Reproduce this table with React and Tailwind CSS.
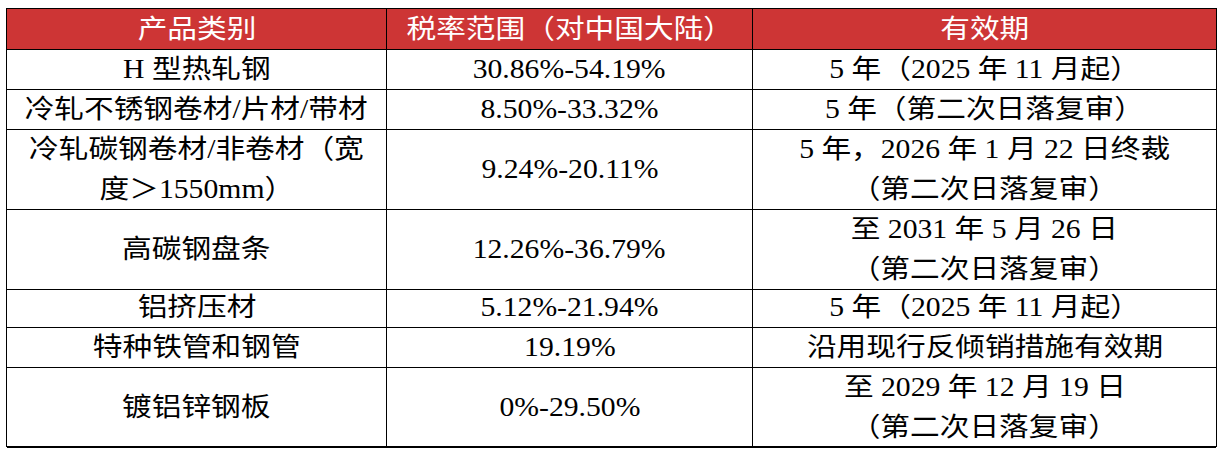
import React from "react";

const rows = [
  { h: "h-[40px]", c: ["H 型热轧钢", "30.86%-54.19%", "5 年（2025 年 11 月起）"] },
  { h: "h-[40px]", c: ["冷轧不锈钢卷材/片材/带材", "8.50%-33.32%", "5 年（第二次日落复审）"] },
  {
    h: "h-[80px]",
    c: [
      ["冷轧碳钢卷材/非卷材（宽", "度＞1550mm）"],
      "9.24%-20.11%",
      ["5 年，2026 年 1 月 22 日终裁", "（第二次日落复审）"],
    ],
  },
  { h: "h-[78px]", c: ["高碳钢盘条", "12.26%-36.79%", ["至 2031 年 5 月 26 日", "（第二次日落复审）"]] },
  { h: "h-[40px]", c: ["铝挤压材", "5.12%-21.94%", "5 年（2025 年 11 月起）"] },
  { h: "h-[40px]", c: ["特种铁管和钢管", "19.19%", "沿用现行反倾销措施有效期"] },
  { h: "h-[79px]", c: ["镀铝锌钢板", "0%-29.50%", ["至 2029 年 12 月 19 日", "（第二次日落复审）"]] },
];

function Line({ children }) {
  return (
    <div className="leading-[40px] whitespace-nowrap">
      <span className="inline-block scale-x-[1.12]">{children}</span>
    </div>
  );
}

function Cell({ v, last }) {
  const lines = Array.isArray(v) ? v : [v];
  return (
    <div
      className={`flex flex-col items-center justify-center border-b border-black ${
        last ? "" : "border-r"
      }`}
    >
      {lines.map((l, i) => (
        <Line key={i}>{l}</Line>
      ))}
    </div>
  );
}

export default function App() {
  return (
    <div className="w-[1227px] h-[456px] bg-white pl-[6px] pt-[8px]">
      <div className="w-[1211px] border border-black text-[26.5px] text-black font-['Liberation_Serif','Noto_Sans_CJK_SC',serif]">
        <div className="grid grid-cols-[380px_366px_463px] h-[40px] bg-[#cd3535] text-white">
          {["产品类别", "税率范围（对中国大陆）", "有效期"].map((t, i) => (
            <div
              key={i}
              className={`flex items-center justify-center border-b border-black ${
                i < 2 ? "border-r" : ""
              }`}
            >
              <Line>{t}</Line>
            </div>
          ))}
        </div>
        {rows.map((r, i) => (
          <div key={i} className={`grid grid-cols-[380px_366px_463px] ${r.h}`}>
            {r.c.map((v, j) => (
              <Cell key={j} v={v} last={j === 2} />
            ))}
          </div>
        ))}
      </div>
    </div>
  );
}
